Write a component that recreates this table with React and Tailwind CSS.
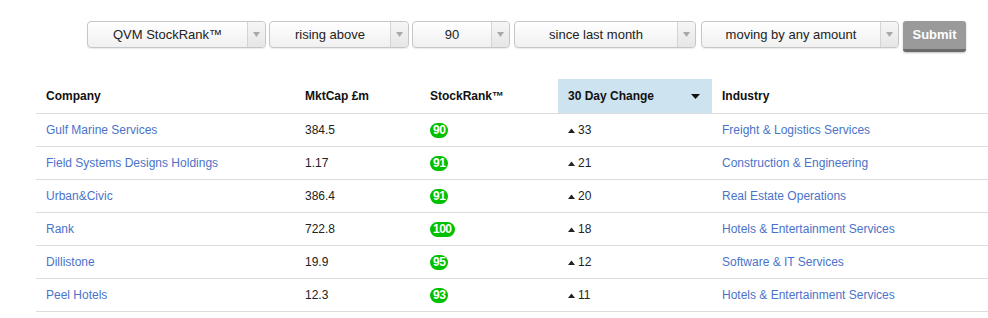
const selects = [
  { label: "QVM StockRank™", w: "w-[179px]", ml: "ml-0" },
  { label: "rising above", w: "w-[140px]", ml: "ml-[3px]" },
  { label: "90", w: "w-[98px]", ml: "ml-[3px]" },
  { label: "since last month", w: "w-[182px]", ml: "ml-[4px]" },
  { label: "moving by any amount", w: "w-[198px]", ml: "ml-[5px]" },
];

const rows = [
  { name: "Gulf Marine Services", cap: "384.5", rank: "90", change: "33", industry: "Freight & Logistics Services" },
  { name: "Field Systems Designs Holdings", cap: "1.17", rank: "91", change: "21", industry: "Construction & Engineering" },
  { name: "Urban&Civic", cap: "386.4", rank: "91", change: "20", industry: "Real Estate Operations" },
  { name: "Rank", cap: "722.8", rank: "100", change: "18", industry: "Hotels & Entertainment Services" },
  { name: "Dillistone", cap: "19.9", rank: "95", change: "12", industry: "Software & IT Services" },
  { name: "Peel Hotels", cap: "12.3", rank: "93", change: "11", industry: "Hotels & Entertainment Services" },
];

function Select({ label, w, ml }) {
  return (
    <div
      className={`${w} ${ml} h-[27px] flex border border-[#c6c6c6] rounded-[4px] bg-gradient-to-b from-white to-[#f0f0f0] shadow-[0_1px_1px_rgba(0,0,0,0.08)]`}
    >
      <div className="flex-1 flex items-center justify-center text-[13px] text-[#222]">
        {label}
      </div>
      <div className="w-[18px] border-l border-[#d4d4d4] bg-gradient-to-b from-[#f6f6f6] to-[#e6e6e6] flex items-center justify-center rounded-r-[4px]">
        <svg width="7" height="5" viewBox="0 0 7 5">
          <path d="M0 0h7L3.5 5z" fill="#a9a9a9" />
        </svg>
      </div>
    </div>
  );
}

function App() {
  return (
    <div className="w-[988px] h-[318px] bg-white overflow-hidden font-['Liberation_Sans',Arial,sans-serif]">
      <div className="flex items-start pt-[21px] pl-[87px]">
        {selects.map((s) => (
          <Select key={s.label} {...s} />
        ))}
        <button className="ml-[4px] w-[63px] h-[31px] bg-[#9a9a9a] border-b-[3px] border-[#6a6a6a] rounded-[3px] text-white font-bold text-[13px] shadow-[0_1px_2px_rgba(0,0,0,0.25)]">
          Submit
        </button>
      </div>

      <div className="ml-[36px] mt-[27px] text-[12px]">
        <div className="flex h-[35px] border-b border-[#dcdcdc] font-bold text-[#111]">
          <div className="w-[259px] pl-[10px] flex items-center">Company</div>
          <div className="w-[125px] pl-[10px] flex items-center">MktCap £m</div>
          <div className="w-[138px] pl-[10px] flex items-center">StockRank™</div>
          <div className="w-[154px] pl-[10px] pr-[12px] flex items-center justify-between bg-[#cde3ef]">
            <span>30 Day Change</span>
            <svg width="9" height="5" viewBox="0 0 9 5">
              <path d="M0 0h9L4.5 5z" fill="#111" />
            </svg>
          </div>
          <div className="flex-1 pl-[10px] flex items-center">Industry</div>
        </div>
        {rows.map((r) => (
          <div
            key={r.name}
            className="flex h-[33px] border-b border-[#dcdcdc] text-[#222]"
          >
            <div className="w-[259px] pl-[10px] flex items-center text-[#4a73c9]">
              {r.name}
            </div>
            <div className="w-[125px] pl-[10px] flex items-center">{r.cap}</div>
            <div className="w-[138px] pl-[10px] flex items-center">
              <span className="bg-[#00c000] text-white font-bold text-[12px] leading-[15px] h-[15px] px-[3px] rounded-full tracking-[-0.5px]">
                {r.rank}
              </span>
            </div>
            <div className="w-[154px] pl-[10px] flex items-center gap-[3px]">
              <svg width="7" height="5" viewBox="0 0 7 5">
                <path d="M3.5 0.5L7 5H0z" fill="#222" />
              </svg>
              <span>{r.change}</span>
            </div>
            <div className="flex-1 pl-[10px] flex items-center text-[#4a73c9]">
              {r.industry}
            </div>
          </div>
        ))}
      </div>
    </div>
  );
}

export default App;
